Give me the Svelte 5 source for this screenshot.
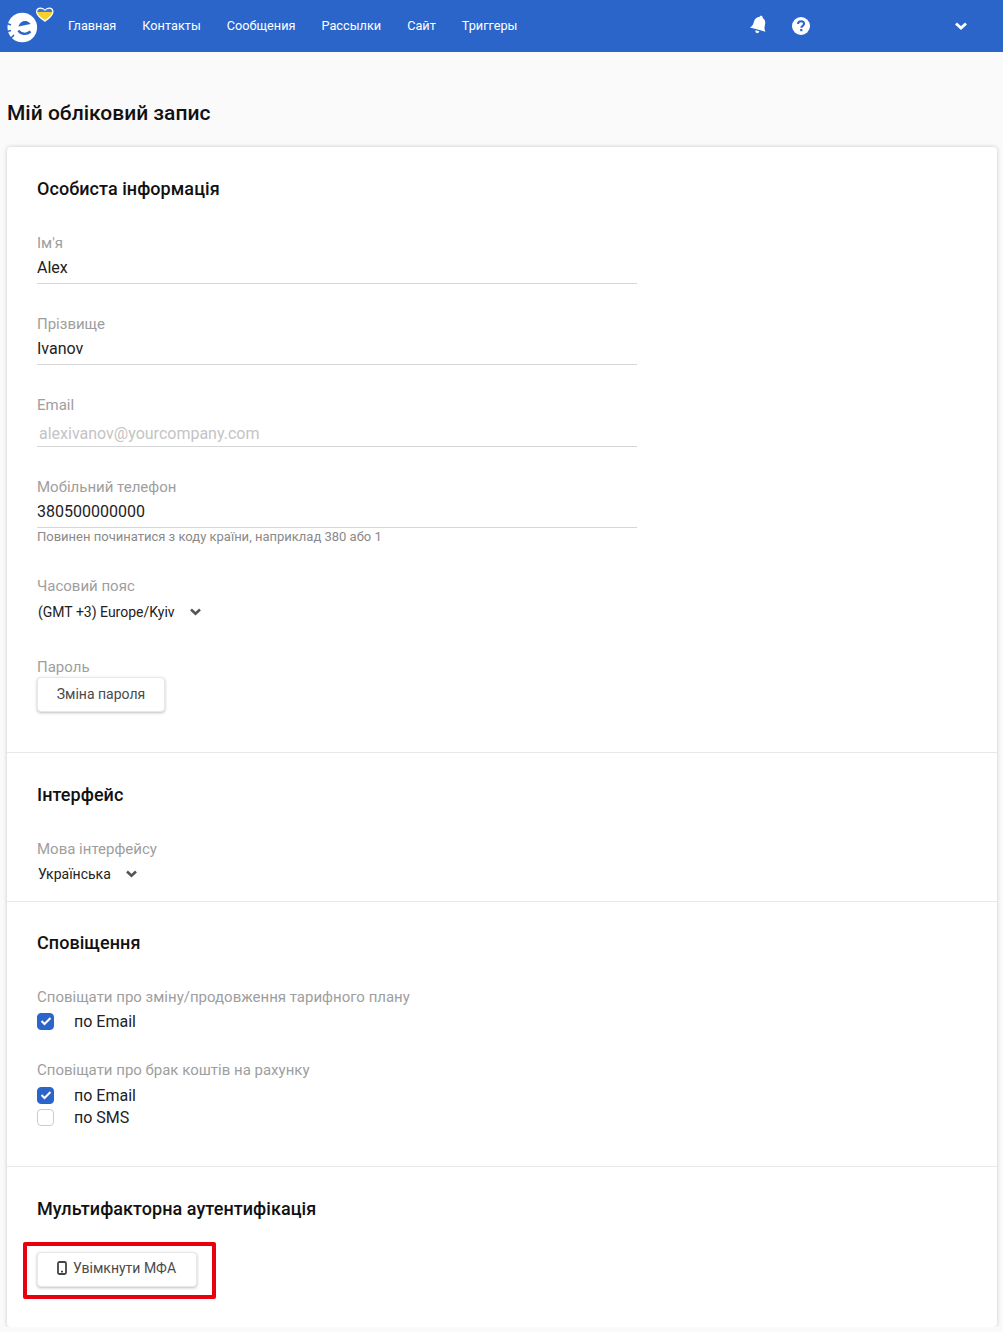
<script>
    const links = ['Главная', 'Контакты', 'Сообщения', 'Рассылки', 'Сайт', 'Триггеры']
</script>

<header class="topbar">
    <div class="logo">
        <svg width="56" height="52" viewBox="0 0 56 52">
            <circle cx="22.300" cy="27.500" r="14.800" fill="#fff"/>
            <path d="M18.500 26.500 C19.500 22 24 20 27 21.300 C29 22.200 30.200 23.300 30.500 24 Z" fill="#2b65c9"/>
            <path d="M18.500 30.500 C20.500 34.500 26.500 35 30.500 31.500" fill="none" stroke="#2b65c9" stroke-width="2.400"/>
            <path d="M7 23.500 L11 25 M7 31.500 L11 30.500 M11 38 L14 35" stroke="#2b65c9" stroke-width="1.600"/>
            <path d="M45 22 C41 19 36 15.500 36 11.500 C36 6.500 42.500 6.500 45 9.500 C47.500 6.500 53.500 6.500 53.500 11.500 C53.500 15.500 49 19 45 22 Z" fill="#fff"/>
            <path d="M37.200 12 C37 8 42.500 7.500 45 11 C47.500 7.500 52.500 8 52.300 12 Z" fill="#3f78c9"/>
            <path d="M37.200 12 H52.300 C52 15 48.500 17.500 45 20.300 C41.500 17.500 37.500 15 37.200 12 Z" fill="#f5cf2c"/>
        </svg>
    </div>
    <nav class="links">
        {#each links as link}
            <a href="#top">{link}</a>
        {/each}
    </nav>
    <div class="actions">
        <svg class="bell" width="20" height="20" viewBox="0 0 20 20">
            <g transform="rotate(15 10 10)">
                <path d="M10 0.500 C11 0.500 11.600 1.200 11.600 2.200 C14.800 3 15.800 6 15.800 9 C15.800 12 16.800 13.600 18 14.800 H2 C3.200 13.600 4.200 12 4.200 9 C4.200 6 5.200 3 8.400 2.200 C8.400 1.200 9 0.500 10 0.500 Z" fill="#fff"/>
                <path d="M8 16 H12 C12 17.600 11 18.400 10 18.400 C9 18.400 8 17.600 8 16 Z" fill="#fff"/>
            </g>
        </svg>
        <svg class="help" width="18" height="18" viewBox="0 0 18 18">
            <circle cx="9" cy="9" r="9" fill="#fff"/>
            <path d="M6 7 C6 5.200 7.400 4.200 9.100 4.200 C10.800 4.200 12.100 5.200 12.100 6.800 C12.100 8.800 9.300 8.900 9.300 10.800" fill="none" stroke="#2b65c9" stroke-width="2"/>
            <rect x="8.200" y="12" width="2.200" height="2.200" fill="#2b65c9"/>
        </svg>
        <svg class="caret" width="14" height="10" viewBox="0 0 14 10">
            <path d="M2 2.500 L7 7 L12 2.500" fill="none" stroke="#fff" stroke-width="2.800"/>
        </svg>
    </div>
</header>

<main class="page">
    <h1>Мій обліковий запис</h1>

    <div class="card">
        <section class="personal">
            <h2>Особиста інформація</h2>

            <div class="field">
                <span class="label">Ім'я</span>
                <div class="value">Alex</div>
            </div>
            <div class="field">
                <span class="label">Прізвище</span>
                <div class="value">Ivanov</div>
            </div>
            <div class="field email">
                <span class="label">Email</span>
                <div class="value disabled">alexivanov@yourcompany.com</div>
            </div>
            <div class="field phone">
                <span class="label">Мобільний телефон</span>
                <div class="value">380500000000</div>
                <div class="hint">Повинен починатися з коду країни, наприклад 380 або 1</div>
            </div>
            <div class="plain tz">
                <span class="label">Часовий пояс</span>
                <div class="select">
                    (GMT +3) Europe/Kyiv
                    <svg width="11" height="8" viewBox="0 0 11 8"><path d="M1 1.500 L5.500 5.800 L10 1.500" fill="none" stroke="#555" stroke-width="2.600"/></svg>
                </div>
            </div>
            <div class="plain pass">
                <span class="label">Пароль</span>
                <button class="btn">Зміна пароля</button>
            </div>
        </section>

        <section class="iface">
            <h2>Інтерфейс</h2>
            <div class="plain">
                <span class="label">Мова інтерфейсу</span>
                <div class="select lang">
                    Українська
                    <svg width="11" height="8" viewBox="0 0 11 8"><path d="M1 1.500 L5.500 5.800 L10 1.500" fill="none" stroke="#555" stroke-width="2.600"/></svg>
                </div>
            </div>
        </section>

        <section class="notify">
            <h2>Сповіщення</h2>
            <div class="group first">
                <span class="label">Сповіщати про зміну/продовження тарифного плану</span>
                <div class="check"><span class="box on"><svg width="12" height="10" viewBox="0 0 12 10"><path d="M1.500 5 L4.500 8 L10.500 2" fill="none" stroke="#fff" stroke-width="2"/></svg></span>по Email</div>
            </div>
            <div class="group second">
                <span class="label">Сповіщати про брак коштів на рахунку</span>
                <div class="check"><span class="box on"><svg width="12" height="10" viewBox="0 0 12 10"><path d="M1.500 5 L4.500 8 L10.500 2" fill="none" stroke="#fff" stroke-width="2"/></svg></span>по Email</div>
                <div class="check"><span class="box"></span>по SMS</div>
            </div>
        </section>

        <section class="mfa">
            <h2>Мультифакторна аутентифікація</h2>
            <div class="mark">
                <button class="btn wide">
                    <svg width="10" height="14" viewBox="0 0 10 14"><rect x="1" y="1" width="8" height="12" rx="1.500" fill="none" stroke="#444" stroke-width="1.800"/><rect x="4" y="9.800" width="2" height="1.600" fill="#444"/></svg>
                    Увімкнути МФА
                </button>
                <span class="redbox"></span>
            </div>
        </section>
    </div>
</main>

<style>
    :global(body) {
        background: #fafafa;
        font-family: Roboto, "Liberation Sans", sans-serif;
    }

    .topbar {
        height: 52px;
        background: #2b65c9;
        display: flex;
        align-items: center;
    }
    .logo {
        width: 56px;
        height: 52px;
    }
    .links {
        display: flex;
        gap: 26px;
        margin-left: 12px;
        padding-bottom: 1px;
    }
    .links a {
        color: #fff;
        font-size: 12.72px;
        text-decoration: none;
    }
    .actions {
        display: flex;
        align-items: center;
        margin-left: auto;
        padding-right: 35px;
    }
    .bell { margin-right: 23px; margin-top: -3px; margin-left: -2px; }
    .help { margin-right: 144px; }

    .page {
        padding: 0 6px 0 7px;
    }
    h1 {
        margin: 0;
        padding: 48px 0 21px;
        font-size: 21px;
        line-height: 26px;
        font-weight: 500;
        color: #111;
    }
    .card {
        background: #fff;
        border-radius: 4px;
        box-shadow: 0 0 4px rgba(0, 0, 0, 0.2);
    }
    section {
        padding: 0 30px;
        border-bottom: 1px solid #e8e8e8;
    }
    section:last-child { border-bottom: 0; }
    h2 {
        margin: 0;
        font-size: 18px;
        line-height: 22px;
        font-weight: 500;
        letter-spacing: 0.06px;
        color: #111;
    }
    .personal { padding-top: 31px; height: 574px; }
    .personal h2 { margin-bottom: 34px; }
    .iface { padding-top: 31px; height: 117px; }
    .iface h2 { margin-bottom: 34px; }
    .notify { padding-top: 30px; height: 234px; }
    .notify h2 { margin-bottom: 34px; }
    .mfa { padding-top: 31px; height: 129px; }
    .mfa h2 { margin-bottom: 32px; }

    .label {
        display: block;
        font-size: 15px;
        line-height: 18px;
        color: #9e9e9e;
    }
    .field {
        width: 600px;
        margin-bottom: 31px;
    }
    .value {
        font-size: 16px;
        line-height: 22px;
        padding: 5px 0 4px;
        color: #222;
        border-bottom: 1px solid #d6d6d6;
    }
    .value.disabled {
        color: #c4c4c4;
        padding: 9px 2px 1px;
    }
    .hint {
        font-size: 13px;
        line-height: 18px;
        color: #8a8a8a;
    }
    .select {
        display: flex;
        align-items: center;
        font-size: 14px;
        line-height: 20px;
        color: #222;
        padding: 7px 0 0 1px;
    }
    .select svg { margin-left: 15px; }
    .lang { padding-top: 6px; }
    .tz { margin-bottom: 36px; }
    .first { margin-bottom: 28px; }
    .check {
        display: flex;
        align-items: center;
        font-size: 16px;
        line-height: 22px;
        color: #222;
    }
    .group > .label { margin-bottom: 6px; }
    .first > .label { margin-bottom: 5px; }
    .box {
        width: 17px;
        height: 17px;
        box-sizing: border-box;
        margin: 0 20px 2px 0;
        border: 1px solid #ccc;
        border-radius: 4px;
        display: flex;
        align-items: center;
        justify-content: center;
    }
    .box.on {
        background: #2b65c9;
        border-color: #2b65c9;
    }
    .btn {
        display: flex;
        align-items: center;
        justify-content: center;
        gap: 6px;
        width: 128px;
        height: 35px;
        margin-top: 1px;
        padding: 0 0 1px;
        background: #fff;
        border: 1px solid #e8e8e8;
        border-radius: 4px;
        box-shadow: 0 1px 3px rgba(0, 0, 0, 0.25);
        font-family: inherit;
        font-size: 14px;
        color: #4a4a4a;
    }
    .btn.wide { width: 160px; margin-top: 0; padding: 0 1px 3px 0; }
    .mark {
        position: relative;
        width: 160px;
    }
    .redbox {
        position: absolute;
        left: -14px;
        top: -10px;
        width: 193px;
        height: 57px;
        box-sizing: border-box;
        border: 4px solid #e8000c;
        border-radius: 2px;
    }
</style>
